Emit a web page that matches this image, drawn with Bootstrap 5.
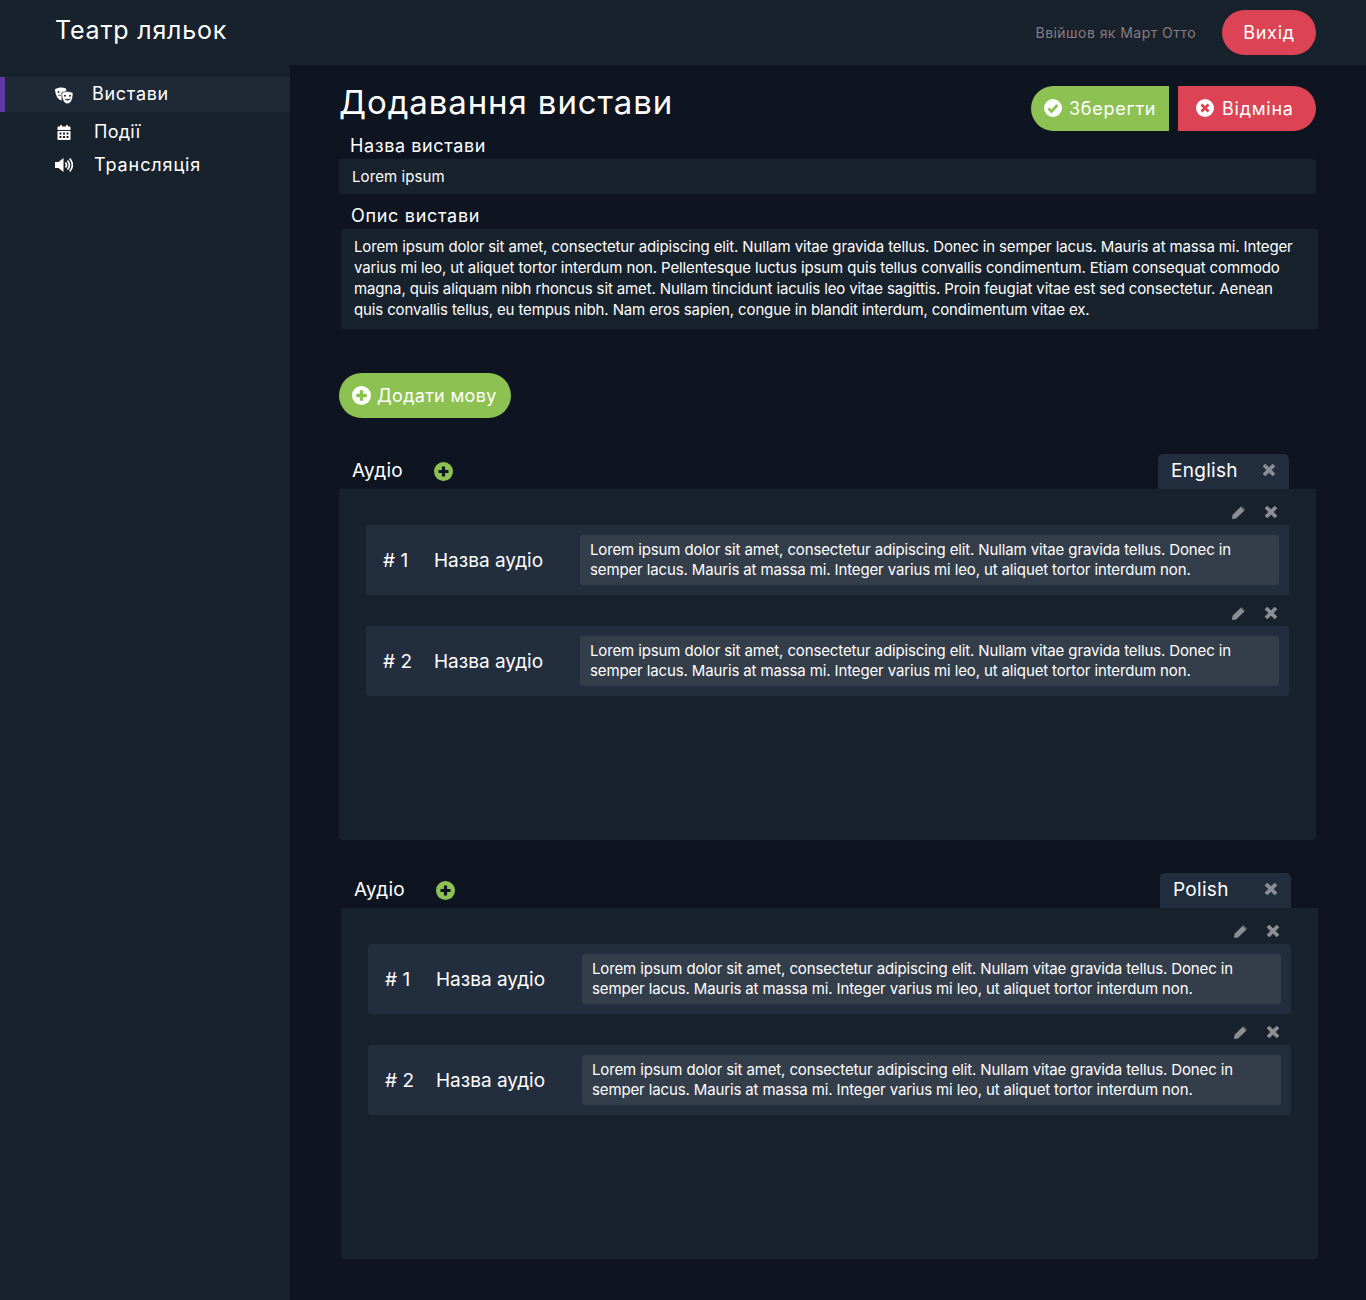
<!DOCTYPE html>
<html lang="uk">
<head>
  <meta charset="UTF-8" />
  <meta name="viewport" content="width=device-width, initial-scale=1.0"/>
  <title>Театр ляльок</title>
  <link href="https://cdn.jsdelivr.net/npm/bootstrap@5.3.3/dist/css/bootstrap.min.css" rel="stylesheet"/>
  <script src="https://cdn.jsdelivr.net/npm/bootstrap@5.3.3/dist/js/bootstrap.bundle.min.js"></script>
  <style>
    body { background: #0e1520; color: #fff; font-family: Inter, "Noto Sans", sans-serif; letter-spacing: .3px; min-height: 1300px; }
    .top-bar { background: #18222c; height: 65px; padding: 0 50px 0 55px; }
    .brand { font-size: 25px; color: #fff; text-decoration: none; letter-spacing: .8px; margin-bottom: 4px; }
    .who { font-size: 14px; color: #8a7a80; margin-right: 26px; letter-spacing: .45px; }
    .pill { height: 45px; border: 0; border-radius: 23px; color: #fff; font-size: 18px; padding: 0 13px; letter-spacing: .75px; }
    .pill svg { width: 18px; height: 18px; flex-shrink: 0; }
    .pill-red { background: #dc4455; }
    .pill-green { background: #8dc253; }
    .pill-left { border-radius: 23px 0 0 23px; width: 138px; gap: 7px; padding-bottom: 1px; }
    .pill-right { border-radius: 0 23px 23px 0; width: 138px; padding-left: 18px; gap: 8px; margin-left: 9px; padding-bottom: 1px; }
    .exit { width: 94px; padding: 0; }
    .side { width: 290px; background: #18222c; padding-top: 12px; min-height: 1235px; flex-shrink: 0; }
    .side-item { display: flex; align-items: center; color: #fff; font-size: 18px; text-decoration: none; padding-left: 55px; letter-spacing: .7px; }
    .side-item svg { width: 18px; height: 18px; flex-shrink: 0; }
    .side-active { height: 35px; background: #1f2936; border-left: 5px solid #5e3aa0; padding-left: 50px; }
    .side-active span { margin-left: 19px; margin-bottom: 2px; }
    .side-cal { height: 33px; margin-top: 3px; }
    .side-cal span { margin-left: 21px; letter-spacing: .3px; }
    .side-snd { height: 33px; }
    .side-snd span { margin-left: 21px; letter-spacing: .9px; }
    .main-col { padding: 21px 50px 0 49px; width: 1076px; }
    .page-title { font-size: 33px; font-weight: 400; margin: 0; line-height: 33px; letter-spacing: .9px; }
    .fld-label { font-size: 18px; line-height: 27px; letter-spacing: .6px; }
    .name-label { height: 28px; padding: 1px 0 0 11px; }
    .desc-label { height: 35px; padding: 8px 0 0 12px; letter-spacing: .7px; }
    .fld-box { background: #18222c; border-radius: 3px; font-size: 15px; letter-spacing: -.13px; }
    .name-box { height: 35px; line-height: 35px; padding-left: 13px; letter-spacing: .1px; }
    .desc-wrap { margin: 0 -2px 0 2px; }
    .desc-box { height: 100px; padding: 7px 20px 8px 13px; line-height: 21px; }
    .add-lang { margin-top: 44px; width: 172px; letter-spacing: .3px; gap: 6px; }
    .add-lang svg { width: 19px; height: 19px; }
    .lang-block { margin-top: 36px; }
    .lang-head { height: 35px; padding-left: 13px; font-size: 19px; padding-right: 27px; }
    .lang-head .plus { width: 19px; height: 19px; margin-left: 31px; }
    .lang-tab { background: #222e3d; width: 131px; height: 35px; border-radius: 5px 5px 0 0; padding: 0 13px; }
    .lang-tab .x-ico { margin-bottom: 3px; }
    .x-ico { width: 14px; height: 14px; }
    .pen-ico { width: 13px; height: 13px; }
    .lang-panel { background: #18222c; height: 351px; border-radius: 0 0 4px 4px; padding: 13px 27px 0; }
    .row-tools { height: 23px; gap: 19px; padding: 0 11px 3px 0; }
    .audio-row { background: #222e3d; height: 70px; border-radius: 3px; padding: 10px 10px 10px 17px; margin-bottom: 8px; }
    .audio-num { width: 51px; font-size: 19px; flex-shrink: 0; letter-spacing: 0; margin-top: 2px; }
    .audio-name { width: 146px; font-size: 19px; flex-shrink: 0; letter-spacing: 0; margin-top: 2px; }
    .audio-text { background: #343e4b; border-radius: 3px; height: 50px; padding: 5px 10px; font-size: 15px; line-height: 20px; flex-grow: 1; letter-spacing: -.13px; }
    .shifted { margin: 33px -2px 0 2px; }
  </style>
</head>
<body>

  <!-- шапка -->
  <div class="top-bar d-flex align-items-center justify-content-between">
    <a class="brand" href="#">Театр ляльок</a>
    <div class="d-flex align-items-center">
      <span class="who">Ввійшов як Март Отто</span>
      <button class="pill pill-red exit">Вихід</button>
    </div>
  </div>

  <div class="d-flex">
    <!-- меню -->
    <div class="side">
      <a class="side-item side-active" href="#">
        <svg viewBox="0 0 18 18"><path fill="#fff" d="M0 3.200C3.500 1.200 7.500 1 11 2.500l.5 3.500C9 6.500 7 8 6.800 10.500l-.3 4C3 13.500.3 9.500 0 3.200z"/><path fill="#fff" stroke="#1f2936" stroke-width=".7" d="M6.800 6.800C10.500 5 14.500 5 18 6.800c.2 6-2 10.700-5.500 11S6.500 13 6.800 6.800z"/><circle cx="10" cy="9.800" r="1" fill="#1f2936"/><circle cx="15" cy="9.800" r="1" fill="#1f2936"/><path fill="#1f2936" d="M9.500 12.500c1.800 1 4 1 6-.3-.5 2.700-5 3.200-6 .3z"/><circle cx="3.500" cy="6" r=".9" fill="#1f2936"/><path fill="none" stroke="#1f2936" stroke-width=".8" d="M3 10c.8-.8 1.800-1 3-.6"/></svg>
        <span>Вистави</span>
      </a>
      <a class="side-item side-cal" href="#">
        <svg viewBox="0 0 18 18"><path fill="#fff" d="M3.500 3.500H5V2h1.800v1.500h4.400V2H13v1.500h1.500a1 1 0 0 1 1 1V7h-13V4.500a1 1 0 0 1 1-1zM2.500 8h13v8a1 1 0 0 1-1 1h-11a1 1 0 0 1-1-1z"/><path fill="#18222c" d="M4.500 9.500h2v2h-2zM8 9.500h2v2H8zM11.500 9.500h2v2h-2zM4.500 13h2v2h-2zM8 13h2v2H8zM11.500 13h2v2h-2z"/></svg>
        <span>Події</span>
      </a>
      <a class="side-item side-snd" href="#">
        <svg viewBox="0 0 18 18"><path fill="#fff" d="M0 6h3.500L8.500 2v14l-5-4H0z"/><path fill="none" stroke="#fff" stroke-width="1.700" d="M10.500 6.500c1.200 1.500 1.200 3.500 0 5M12.500 4.500c2.300 2.800 2.300 6.200 0 9M14.700 2.500c3.300 4 3.300 9 0 13"/></svg>
        <span>Трансляція</span>
      </a>
    </div>

    <!-- основна частина -->
    <div class="main-col">
      <div class="d-flex justify-content-between align-items-start">
        <h1 class="page-title">Додавання вистави</h1>
        <div class="d-flex">
          <button class="pill pill-green pill-left d-flex align-items-center">
            <svg viewBox="0 0 18 18"><circle cx="9" cy="9" r="9" fill="#fff"/><path d="M4.500 9.500l3 3 6-6.500" fill="none" stroke="#8dc253" stroke-width="2.600"/></svg>
            Зберегти
          </button>
          <button class="pill pill-red pill-right d-flex align-items-center">
            <svg viewBox="0 0 18 18"><circle cx="9" cy="9" r="9" fill="#fff"/><path d="M5.500 5.500l7 7M12.500 5.500l-7 7" stroke="#dc4455" stroke-width="2.800"/></svg>
            Відміна
          </button>
        </div>
      </div>

      <div class="fld-label name-label">Назва вистави</div>
      <div class="fld-box name-box">Lorem ipsum</div>

      <div class="fld-label desc-label">Опис вистави</div>
      <div class="desc-wrap">
        <div class="fld-box desc-box">Lorem ipsum dolor sit amet, consectetur adipiscing elit. Nullam vitae gravida tellus. Donec in semper lacus. Mauris at massa mi. Integer varius mi leo, ut aliquet tortor interdum non. Pellentesque luctus ipsum quis tellus convallis condimentum. Etiam consequat commodo magna, quis aliquam nibh rhoncus sit amet. Nullam tincidunt iaculis leo vitae sagittis. Proin feugiat vitae est sed consectetur. Aenean quis convallis tellus, eu tempus nibh. Nam eros sapien, congue in blandit interdum, condimentum vitae ex.</div>
      </div>

      <button class="pill pill-green add-lang d-flex align-items-center">
        <svg viewBox="0 0 18 18"><circle cx="9" cy="9" r="9" fill="#fff"/><path d="M9 4v10M4 9h10" stroke="#8dc253" stroke-width="3.200"/></svg>
        Додати мову
      </button>

      <div id="langs"></div>
    </div>
  </div>

  <script>
    const lorem = "Lorem ipsum dolor sit amet, consectetur adipiscing elit. Nullam vitae gravida tellus. Donec in semper lacus. Mauris at massa mi. Integer varius mi leo, ut aliquet tortor interdum non."
    const xIcon = '<svg class="x-ico" viewBox="0 0 14 14"><path d="M2 2l10 10M12 2L2 12" stroke="#8b8f94" stroke-width="3.800"/></svg>'
    const pencil = '<svg class="pen-ico" viewBox="0 0 14 14"><path fill="#8b8f94" d="M0 14l.6-4.600L9.400.8l4 4-9 8.600zM10.300 0l3.700 3.700-.1.500-4-4z"/></svg>'

    function audioRow(n) {
      return `
        <div class="row-tools d-flex justify-content-end align-items-center">${pencil}${xIcon}</div>
        <div class="audio-row d-flex align-items-center">
          <div class="audio-num"># ${n}</div>
          <div class="audio-name">Назва аудіо</div>
          <div class="audio-text">${lorem}</div>
        </div>`
    }

    function langBlock(name, cls) {
      return `
        <div class="${cls}">
          <div class="lang-head d-flex align-items-center justify-content-between">
            <div class="d-flex align-items-center">Аудіо
              <svg class="plus" viewBox="0 0 19 19"><circle cx="9.500" cy="9.500" r="9.500" fill="#8dc253"/><path d="M9.500 4.500v10M4.500 9.500h10" stroke="#0e141f" stroke-width="3.200"/></svg>
            </div>
            <div class="lang-tab d-flex align-items-center justify-content-between">${name}${xIcon}</div>
          </div>
          <div class="lang-panel">${audioRow(1)}${audioRow(2)}</div>
        </div>`
    }

    document.querySelector("#langs").innerHTML = langBlock("English", "lang-block") + langBlock("Polish", "shifted")
  </script>

</body>
</html>
